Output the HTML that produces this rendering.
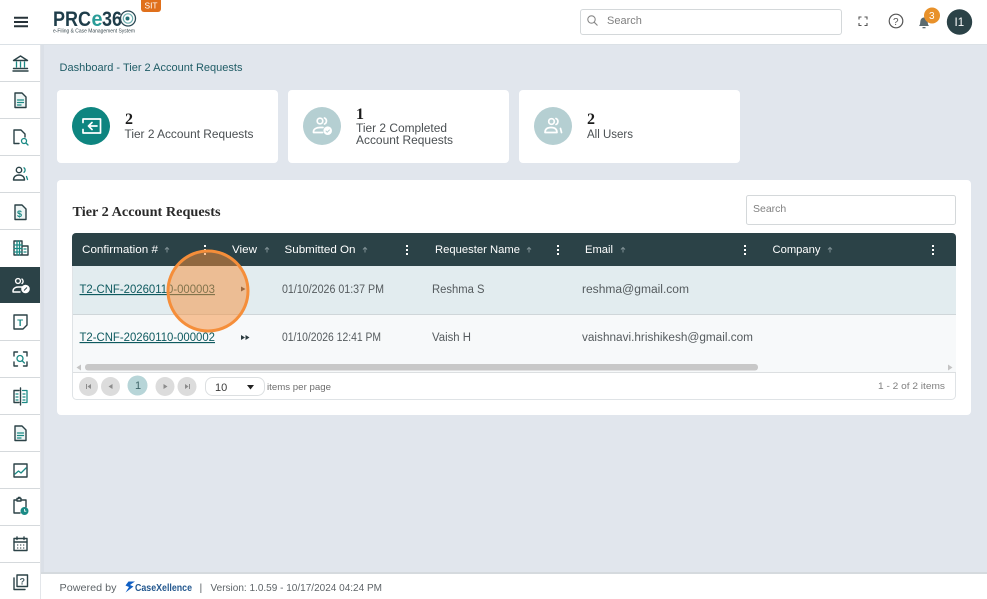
<!DOCTYPE html>
<html lang="en"><head><meta charset="utf-8"><title>Tier 2 Account Requests</title>
<style>
html,body{margin:0;padding:0;width:987px;height:599px;overflow:hidden;background:#e1e6ed}
svg{display:block;position:absolute;left:0;top:0}
text{font-family:"Liberation Sans",Arial,sans-serif;white-space:pre}
.s{fill:none;stroke:#2b4247;stroke-width:1.4;stroke-linejoin:round;stroke-linecap:round}
.t{fill:none;stroke:#1a8a85;stroke-width:1.3;stroke-linecap:round;stroke-linejoin:round}
.w{fill:none;stroke:#fff;stroke-width:1.7;stroke-linecap:round;stroke-linejoin:round}
.hd{font-size:11px;fill:#fff;font-weight:400}
.cell{font-size:11.5px;fill:#555b5e}
.lnk{font-size:11.5px;fill:#0e5a5f;text-decoration:underline}
.lab{font-size:11.5px;fill:#4a4f52}
.num{font-family:"Liberation Serif",serif;font-weight:700;font-size:16px;fill:#1c1c1c}
</style></head><body>
<svg width="987" height="599" viewBox="0 0 987 599" xmlns="http://www.w3.org/2000/svg">
<rect width="987" height="599" fill="#e1e6ed"/>
<!-- top bar -->
<rect width="987" height="44" fill="#fff"/>
<rect y="44" width="987" height="1" fill="#dbe1e6"/>
<path d="M14 17.700h14M14 22h14M14 26.300h14" stroke="#263238" stroke-width="2" fill="none"/>
<text x="53" y="26" font-size="21" font-weight="700" fill="#1f3d4a" textLength="38" lengthAdjust="spacingAndGlyphs">PRC</text>
<text x="91.500" y="26" font-size="21" font-weight="700" fill="#2a9c98" textLength="11" lengthAdjust="spacingAndGlyphs">e</text>
<text x="102" y="26" font-size="21" font-weight="700" fill="#1f3d4a" textLength="20" lengthAdjust="spacingAndGlyphs">36</text>
<circle cx="128" cy="18.500" r="7.500" fill="none" stroke="#2b4a55" stroke-width="1.300"/>
<circle cx="128" cy="18.500" r="4.700" fill="none" stroke="#6fb0b0" stroke-width="1.200"/>
<circle cx="127.500" cy="18.500" r="2" fill="#1f6f74"/>
<text x="53" y="32.500" font-size="5.500" fill="#3b4a50" textLength="82" lengthAdjust="spacingAndGlyphs">e-Filing &amp; Case Management System</text>
<path d="M141 0h20v9a3 3 0 0 1-3 3h-14a3 3 0 0 1-3-3z" fill="#e0701c"/>
<text x="144.500" y="8.500" font-size="8.500" fill="#fff" textLength="13" lengthAdjust="spacingAndGlyphs">SIT</text>
<rect x="580.500" y="9.500" width="261" height="25" rx="2.500" fill="#fff" stroke="#d4d8da"/>
<circle cx="591.500" cy="19.500" r="3.700" fill="none" stroke="#888" stroke-width="1.100"/><path d="M594.300 22.300l3.200 3.200" stroke="#888" stroke-width="1.100"/>
<text x="607" y="24" font-size="11" fill="#808080">Search</text>
<path d="M859 19.500v-2.500h2.500M864.500 17h2.500v2.500M867 23v2.500h-2.500M861.500 25.500h-2.500v-2.500" fill="none" stroke="#555" stroke-width="1.100"/>
<circle cx="896" cy="21" r="6.800" fill="none" stroke="#555" stroke-width="1.200"/>
<text x="893" y="24.800" font-size="10" fill="#555">?</text>
<path d="M919 26c1.500-1.500 1-3.500 1.500-5.500.5-2 2-3 3.500-3s3 1 3.500 3c.5 2 0 4 1.500 5.500z" fill="#5b6b70"/><rect x="922.500" y="27" width="3" height="1.300" fill="#5b6b70"/>
<circle cx="932" cy="15.500" r="8" fill="#e8912a"/>
<text x="929" y="19" font-size="10" fill="#fff">3</text>
<circle cx="959.500" cy="22" r="12.700" fill="#2b4247"/>
<text x="954.500" y="26" font-size="11.500" fill="#fff">I1</text>

<!-- sidebar -->
<rect x="0" y="45" width="40" height="554" fill="#fff"/>
<rect x="40" y="45" width="1" height="554" fill="#e3e6ea"/>
<rect x="41" y="45" width="3" height="527" fill="#dbe0e7"/>
<g fill="#d5d9dc">
<rect y="81" width="40" height="1"/><rect y="118" width="40" height="1"/><rect y="155" width="40" height="1"/><rect y="192" width="40" height="1"/><rect y="229" width="40" height="1"/><rect y="340" width="40" height="1"/><rect y="377" width="40" height="1"/><rect y="414" width="40" height="1"/><rect y="451" width="40" height="1"/><rect y="488" width="40" height="1"/><rect y="525" width="40" height="1"/><rect y="562" width="40" height="1"/>
</g>
<rect y="267" width="40" height="36" fill="#2b4247"/>
<!-- bank -->
<path class="s" d="M13.500 60.500L20.500 56l7 4.500zM13.500 68.500h14M13 71h15"/><path class="t" d="M16.500 62v5M20.500 62v5M24.500 62v5"/>
<!-- doc -->
<path class="s" d="M15 93h7l4 4v10.500h-11z" style="fill:#eef5f5"/><path class="t" d="M17.500 100h6M17.500 102.500h6M17.500 105h3.500"/>
<!-- doc search -->
<path class="s" d="M19 143.500h-5V130h7l4 4v3"/><circle class="t" cx="24" cy="141" r="2.500"/><path class="t" d="M26 143l2 2"/>
<!-- users -->
<circle class="s" cx="19" cy="170" r="2.700"/><path class="s" d="M13.500 180c0-3.500 2.500-5 5.500-5s5.500 1.500 5.500 5z"/><path class="t" d="M24 167.800a2.800 2.800 0 0 1 0 4.500M26.500 176.500l1 3"/>
<!-- doc dollar -->
<path class="s" d="M15 205h7l4 4v10.500h-11z" style="fill:#eef5f5"/><text x="17" y="217" font-size="9" font-weight="700" fill="#1a8a85">$</text>
<!-- building -->
<path class="s" d="M14 241h8v14h-8zM22 246h6v9h-6z"/><path class="t" d="M14 245h8M14 248.500h8M14 252h8M17 241v14M19.500 241v14M24 249h2M24 252h2"/>
<!-- active user -->
<circle class="w" style="stroke-width:1.400" cx="18" cy="281" r="2.400"/><path class="w" style="stroke-width:1.400" d="M13 292v-1c0-2.500 2.500-4 5-4h4M13 292h7M22 279a2.800 2.800 0 0 1 0 4.500"/><circle cx="25.500" cy="289" r="4.300" fill="#fff"/><path d="M24 290.500l3-3" stroke="#2b4247" stroke-width="1"/>
<!-- T note -->
<path class="s" d="M14 315h13v10l-4 4h-9z"/><text x="17.300" y="326" font-size="9.500" font-weight="700" fill="#1a8a85">T</text>
<!-- scan -->
<path class="s" d="M14 356v-4h3.500M23.500 352h3.500v4M27 362v4h-3.500M17.500 366H14v-4"/><circle class="t" cx="20" cy="358.500" r="3"/><path class="t" d="M22.200 360.800l2.200 2.200"/>
<!-- book -->
<path class="s" d="M19 390.500h-5v12h5M20.500 388v17"/><path class="t" d="M22.500 390.500h4.500v12h-4.500M16 394h2M16 397h2M16 400h2M23 394h2M23 397h2M23 400h2"/>
<!-- doc 2 -->
<path class="s" d="M15 426h7l4 4v10.500h-11z" style="fill:#eef5f5"/><path class="t" d="M17.500 433h6M17.500 435.500h6M17.500 438h3.500"/>
<!-- chart -->
<rect class="s" x="14" y="464" width="13" height="13"/><path class="t" d="M15 474l3.500-3 2.500 2 5-5"/>
<!-- clipboard clock -->
<path class="s" d="M20 513h-6v-13h3M21 500h5v7M17 501v-2.500h1.500v-1h1.500v1h1v2.500z"/><circle cx="24.500" cy="511" r="4" fill="#1a8a85"/><path d="M24.500 509v2.200h1.800" stroke="#fff" stroke-width=".8" fill="none"/>
<!-- calendar -->
<rect class="s" x="14" y="538.500" width="13" height="12"/><path class="s" d="M14 542h13M17 537v2.500M24 537v2.500"/><path d="M17 545h1.300M20 545h1.300M23 545h1.300M17 548h1.300M20 548h1.300M23 548h1.300" stroke="#2b4247" stroke-width="1"/>
<!-- help -->
<rect class="s" x="17" y="575" width="10.500" height="11.500"/><path class="s" d="M14 578v11.500h11"/><text x="19.500" y="584.500" font-size="9" font-weight="700" fill="#4b6268">?</text>

<!-- breadcrumb -->
<text x="59.500" y="71" font-size="11" fill="#1f5c66" textLength="183" lengthAdjust="spacingAndGlyphs">Dashboard - Tier 2 Account Requests</text>

<!-- cards -->
<rect x="57" y="90" width="221" height="73" rx="4" fill="#fff"/>
<rect x="288" y="90" width="221" height="73" rx="4" fill="#fff"/>
<rect x="519" y="90" width="221" height="73" rx="4" fill="#fff"/>
<circle cx="91" cy="126" r="19" fill="#0e8580"/>
<path class="w" d="M83 122.500V119h17.500v14H83v-3.500M88.500 126H97M92 122.500l-3.500 3.500 3.500 3.500"/>
<text class="num" x="125" y="124">2</text>
<text class="lab" x="124.500" y="138" textLength="129" lengthAdjust="spacingAndGlyphs">Tier 2 Account Requests</text>
<circle cx="322" cy="126" r="19" fill="#b5cfd2"/>
<circle class="w" cx="320" cy="121" r="2.800"/><path class="w" d="M313.500 132.500v-1c0-2.500 3-4 6.500-4h3M313.500 132.500h9M324.500 118a3.300 3.300 0 0 1 0 6"/><circle cx="327.700" cy="130.700" r="4.300" fill="#fff"/><path d="M325.700 130.700l1.500 1.500 2.500-2.500" stroke="#b5cfd2" fill="none"/>
<text class="num" x="356" y="119">1</text>
<text class="lab" x="356" y="132" textLength="91" lengthAdjust="spacingAndGlyphs">Tier 2 Completed</text>
<text class="lab" x="356" y="144" textLength="97" lengthAdjust="spacingAndGlyphs">Account Requests</text>
<circle cx="553" cy="126" r="19" fill="#b5cfd2"/>
<circle class="w" cx="551.500" cy="121.500" r="2.800"/><path class="w" d="M545 132.500c0-3.500 2.500-5 6-5s6 1.500 6 5zM556 118.500a3.300 3.300 0 0 1 0 6M560.500 128.500l1 4"/>
<text class="num" x="587" y="124">2</text>
<text class="lab" x="587" y="138" textLength="46" lengthAdjust="spacingAndGlyphs">All Users</text>

<!-- panel -->
<rect x="57" y="180" width="914" height="235" rx="4" fill="#fff"/>
<text x="72.500" y="216" style="font-family:'Liberation Serif',serif" font-weight="700" font-size="14" fill="#2a2a2a" textLength="148" lengthAdjust="spacingAndGlyphs">Tier 2 Account Requests</text>
<rect x="746.500" y="195.500" width="209" height="29" rx="2" fill="#fff" stroke="#d4d8da"/>
<text x="753" y="212" font-size="10.500" fill="#808080">Search</text>

<!-- grid -->
<rect x="72.500" y="233.500" width="883" height="166" rx="4" fill="#fff" stroke="#dfe3e6"/>
<path d="M72 266v-29a4 4 0 0 1 4-4h876a4 4 0 0 1 4 4v29z" fill="#2b4247"/>
<rect x="73" y="266" width="883" height="48" fill="#e2ecef"/>
<rect x="73" y="314" width="883" height="1" fill="#cfd6d9"/>
<rect x="73" y="315" width="883" height="47" fill="#f7f9fa"/>
<rect x="73" y="362" width="883" height="10" fill="#f7f9fa"/>
<rect x="85" y="364" width="673" height="6.500" rx="3" fill="#c8c8c8"/>
<path d="M81 364.500v6l-4.500-3z" fill="#c4c4c4"/><path d="M948 364.500v6l4.500-3z" fill="#c4c4c4"/>
<rect x="73" y="372" width="883" height="1" fill="#dcdfe1"/>

<g class="hd">
<text class="hd" x="82" y="253" textLength="76" lengthAdjust="spacingAndGlyphs">Confirmation #</text>
<text class="hd" x="232" y="253" textLength="25" lengthAdjust="spacingAndGlyphs">View</text>
<text class="hd" x="284.500" y="253" textLength="71" lengthAdjust="spacingAndGlyphs">Submitted On</text>
<text class="hd" x="435" y="253" textLength="85" lengthAdjust="spacingAndGlyphs">Requester Name</text>
<text class="hd" x="585" y="253" textLength="28" lengthAdjust="spacingAndGlyphs">Email</text>
<text class="hd" x="772.500" y="253" textLength="48" lengthAdjust="spacingAndGlyphs">Company</text>
</g>
<g stroke="#7f9094" stroke-width="1" fill="none">
<path d="M167 252.500v-5M165 249.500l2-2 2 2"/><path d="M267 252.500v-5M265 249.500l2-2 2 2"/><path d="M365 252.500v-5M363 249.500l2-2 2 2"/><path d="M529 252.500v-5M527 249.500l2-2 2 2"/><path d="M623 252.500v-5M621 249.500l2-2 2 2"/><path d="M830 252.500v-5M828 249.500l2-2 2 2"/>
</g>
<g fill="#fff">
<rect x="204" y="245" width="2" height="2"/><rect x="204" y="249" width="2" height="2"/><rect x="204" y="253" width="2" height="2"/>
<rect x="406" y="245" width="2" height="2"/><rect x="406" y="249" width="2" height="2"/><rect x="406" y="253" width="2" height="2"/>
<rect x="557" y="245" width="2" height="2"/><rect x="557" y="249" width="2" height="2"/><rect x="557" y="253" width="2" height="2"/>
<rect x="744" y="245" width="2" height="2"/><rect x="744" y="249" width="2" height="2"/><rect x="744" y="253" width="2" height="2"/>
<rect x="932" y="245" width="2" height="2"/><rect x="932" y="249" width="2" height="2"/><rect x="932" y="253" width="2" height="2"/>
</g>

<text class="lnk" x="79.500" y="293" textLength="135.500" lengthAdjust="spacingAndGlyphs">T2-CNF-20260110-000003</text>
<path d="M241 286.500v5l4.500-2.500z" fill="#444"/>
<text class="cell" x="282" y="293" textLength="102" lengthAdjust="spacingAndGlyphs">01/10/2026 01:37 PM</text>
<text class="cell" x="432" y="293" textLength="52.500" lengthAdjust="spacingAndGlyphs">Reshma S</text>
<text class="cell" x="582" y="293" textLength="107" lengthAdjust="spacingAndGlyphs">reshma@gmail.com</text>

<text class="lnk" x="79.500" y="341" textLength="135.500" lengthAdjust="spacingAndGlyphs">T2-CNF-20260110-000002</text>
<path d="M241 335v5l4-2.500zM245.500 335v5l4-2.500z" fill="#2b3a3f"/>
<text class="cell" x="282" y="341" textLength="99" lengthAdjust="spacingAndGlyphs">01/10/2026 12:41 PM</text>
<text class="cell" x="432" y="341" textLength="39" lengthAdjust="spacingAndGlyphs">Vaish H</text>
<text class="cell" x="582" y="341" textLength="171" lengthAdjust="spacingAndGlyphs">vaishnavi.hrishikesh@gmail.com</text>

<!-- pager -->
<g fill="#dcdcdc"><circle cx="88.500" cy="386.500" r="9.500"/><circle cx="110.500" cy="386.500" r="9.500"/><circle cx="165" cy="386.500" r="9.500"/><circle cx="187" cy="386.500" r="9.500"/></g>
<g fill="#8c8c8c"><path d="M86 384h1v5h-1zM91 384v5l-3.500-2.500zM112.500 384v5l-4-2.500zM163.500 384v5l4-2.500zM185 384v5l3.500-2.500zM189 384h1v5h-1z"/></g>
<circle cx="137.500" cy="385.500" r="10" fill="#b7d5d8"/>
<text x="135" y="389" font-size="11" fill="#3d6468">1</text>
<rect x="205.500" y="377.500" width="59" height="18" rx="7" fill="#fff" stroke="#dcdfe1"/>
<text x="215" y="391" font-size="11" fill="#3a3a3a">10</text>
<path d="M247 385h7l-3.500 4.500z" fill="#222"/>
<text x="267" y="390" font-size="9.500" fill="#6e6e6e" textLength="64" lengthAdjust="spacingAndGlyphs">items per page</text>
<text x="878" y="389" font-size="9.500" fill="#808080" textLength="67" lengthAdjust="spacingAndGlyphs">1 - 2 of 2 items</text>

<!-- highlight -->
<circle cx="208" cy="291" r="40" fill="#f58e3a" fill-opacity=".5" stroke="#f58e3a" stroke-width="3"/>

<!-- footer -->
<rect x="41" y="574" width="946" height="25" fill="#fff"/>
<rect x="41" y="572" width="946" height="2" fill="#d5dade"/>
<text x="59.500" y="591" font-size="10.500" fill="#5e6468" textLength="57" lengthAdjust="spacingAndGlyphs">Powered by</text>
<path d="M135 581.500h-6.500l-3 4 3.500 1.500-3.500 5.500 8-6-3.500-1.500 2-1.500z" fill="#0f5fc4"/>
<text x="135" y="591" font-size="10.500" font-weight="700" fill="#24588f" textLength="57" lengthAdjust="spacingAndGlyphs">CaseXellence</text>
<text x="199.500" y="591" font-size="10.500" fill="#5e6468">|</text>
<text x="210.500" y="591" font-size="10.500" fill="#5e6468" textLength="171.500" lengthAdjust="spacingAndGlyphs">Version: 1.0.59 - 10/17/2024 04:24 PM</text>
</svg>
</body></html>
